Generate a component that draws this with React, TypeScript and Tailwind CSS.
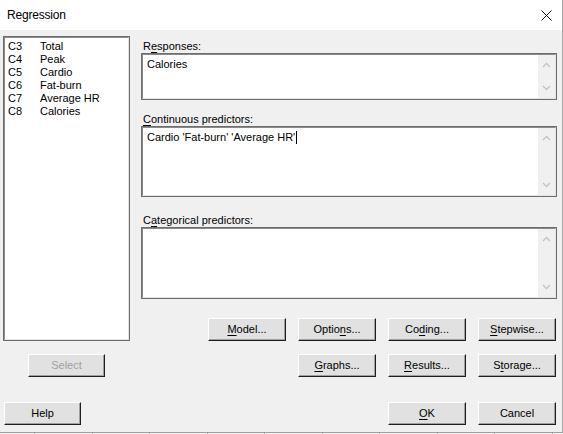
import React from "react";

const font = { fontFamily: '"Liberation Sans", Arial, sans-serif' };

function U({ children }: { children: React.ReactNode }) {
  return <span className="underline underline-offset-[2px] decoration-[1px]">{children}</span>;
}

function Btn({ children, disabled, w = "w-[78px]" }: { children: React.ReactNode; disabled?: boolean; w?: string }) {
  return (
    <div
      className={`${w} h-[23px] flex items-center justify-center bg-[#e1e1e1] border border-t-white border-l-white border-r-[#1e1e1e] border-b-[#1e1e1e] shadow-[inset_-1px_-1px_0_#a0a0a0] text-[11px] ${
        disabled ? "text-[#a0a0a0]" : "text-black"
      }`}
    >
      <span className="leading-[13px]">{children}</span>
    </div>
  );
}

function Chev({ up }: { up?: boolean }) {
  return (
    <svg width="9" height="6" viewBox="0 0 9 6">
      <polyline
        points={up ? "1,5 4.5,1.5 8,5" : "1,1 4.5,4.5 8,1"}
        fill="none"
        stroke="#c4c4c4"
        strokeWidth="1.3"
      />
    </svg>
  );
}

function Box({ h, children }: { h: string; children?: React.ReactNode }) {
  return (
    <div className={`${h} w-[416px] border border-[#6d6d6d] flex`}>
      <div className="flex-1 flex border-t border-l border-t-[#8a8a8a] border-l-[#8a8a8a] border-b border-r border-b-[#e3e3e3] border-r-[#e3e3e3] bg-white">
        <div className="flex-1 pl-[4px] pt-[3px] text-[11px] leading-[13px] text-black">{children}</div>
        <div className="w-[17px] bg-[#f0f0f0] flex flex-col items-center justify-between pt-[7px] pb-[7px]">
          <Chev up />
          <Chev />
        </div>
      </div>
    </div>
  );
}

const vars = [
  ["C3", "Total"],
  ["C4", "Peak"],
  ["C5", "Cardio"],
  ["C6", "Fat-burn"],
  ["C7", "Average HR"],
  ["C8", "Calories"],
];

export default function App() {
  const ticks = [34, 92, 149, 207, 264, 322, 379, 437, 494, 552];
  return (
    <div className="w-[563px] h-[434px] bg-white flex flex-col" style={font}>
      <div className="w-[563px] h-[432px] border-r border-[#a8a8a8] flex flex-col">
        <div className="h-[30px] bg-white flex items-center justify-between pl-[7px] pr-[10px]">
          <span className="text-[12px] text-black tracking-[-0.2px]">Regression</span>
          <svg width="11" height="11" viewBox="0 0 11 11">
            <path d="M0.5 0.5 L10.5 10.5 M10.5 0.5 L0.5 10.5" stroke="#111" strokeWidth="1" />
          </svg>
        </div>
        <div className="flex-1 bg-[#f0f0f0] flex flex-col pt-[6px]">
          <div className="flex">
            {/* left column */}
            <div className="ml-[3px] w-[127px] flex flex-col">
              <div className="h-[305px] border border-[#6d6d6d] flex">
                <div className="flex-1 border-t border-l border-t-[#8a8a8a] border-l-[#8a8a8a] border-b border-r border-b-[#e3e3e3] border-r-[#e3e3e3] bg-white pt-[2px] pl-[3px]">
                  {vars.map(([c, n]) => (
                    <div key={c} className="flex h-[13px] leading-[13px] text-[11px] text-black">
                      <span className="w-[32px]">{c}</span>
                      <span>{n}</span>
                    </div>
                  ))}
                </div>
              </div>
              <div className="mt-[13px] ml-[25px]">
                <Btn w="w-[77px]" disabled>
                  Select
                </Btn>
              </div>
            </div>
            {/* right column */}
            <div className="ml-[11px] w-[416px] flex flex-col pt-[3px]">
              <div className="h-[14px] leading-[14px] text-[11px] text-black pl-[2px]">
                R<U>e</U>sponses:
              </div>
              <Box h="h-[47px]">Calories</Box>
              <div className="mt-[12px] h-[14px] leading-[14px] text-[11px] text-black pl-[2px]">
                <U>C</U>ontinuous predictors:
              </div>
              <Box h="h-[71px]">
                <span className="inline-flex items-center">
                  Cardio 'Fat-burn' 'Average HR'
                  <span className="inline-block w-[1px] h-[13px] bg-black ml-[1px]" />
                </span>
              </Box>
              <div className="mt-[16px] h-[14px] leading-[14px] text-[11px] text-black pl-[2px]">
                C<U>a</U>tegorical predictors:
              </div>
              <Box h="h-[72px]" />
              <div className="mt-[19px] flex justify-end gap-[12px] pr-[1px]">
                <Btn>
                  <U>M</U>odel...
                </Btn>
                <Btn>
                  Optio<U>n</U>s...
                </Btn>
                <Btn>
                  Co<U>d</U>ing...
                </Btn>
                <Btn>
                  <U>S</U>tepwise...
                </Btn>
              </div>
              <div className="mt-[13px] flex justify-end gap-[12px] pr-[1px]">
                <Btn>
                  <U>G</U>raphs...
                </Btn>
                <Btn>
                  <U>R</U>esults...
                </Btn>
                <Btn>
                  S<U>t</U>orage...
                </Btn>
              </div>
            </div>
          </div>
          <div className="mt-[25px] flex items-center">
            <div className="ml-[4px]">
              <Btn w="w-[77px]">Help</Btn>
            </div>
            <div className="flex-1" />
            <div className="flex gap-[12px] mr-[6px]">
              <Btn>
                <U>O</U>K
              </Btn>
              <Btn>Cancel</Btn>
            </div>
          </div>
        </div>
      </div>
      <div className="h-[1px] bg-[#a0a0a0]" />
      <div className="h-[1px] bg-[#f0f0f0] flex">
        {ticks.map((t, i) => (
          <div
            key={t}
            className="h-[1px] bg-[#a0a0a0] w-[1px]"
            style={{ marginLeft: i === 0 ? t : t - ticks[i - 1] - 1 }}
          />
        ))}
      </div>
    </div>
  );
}
